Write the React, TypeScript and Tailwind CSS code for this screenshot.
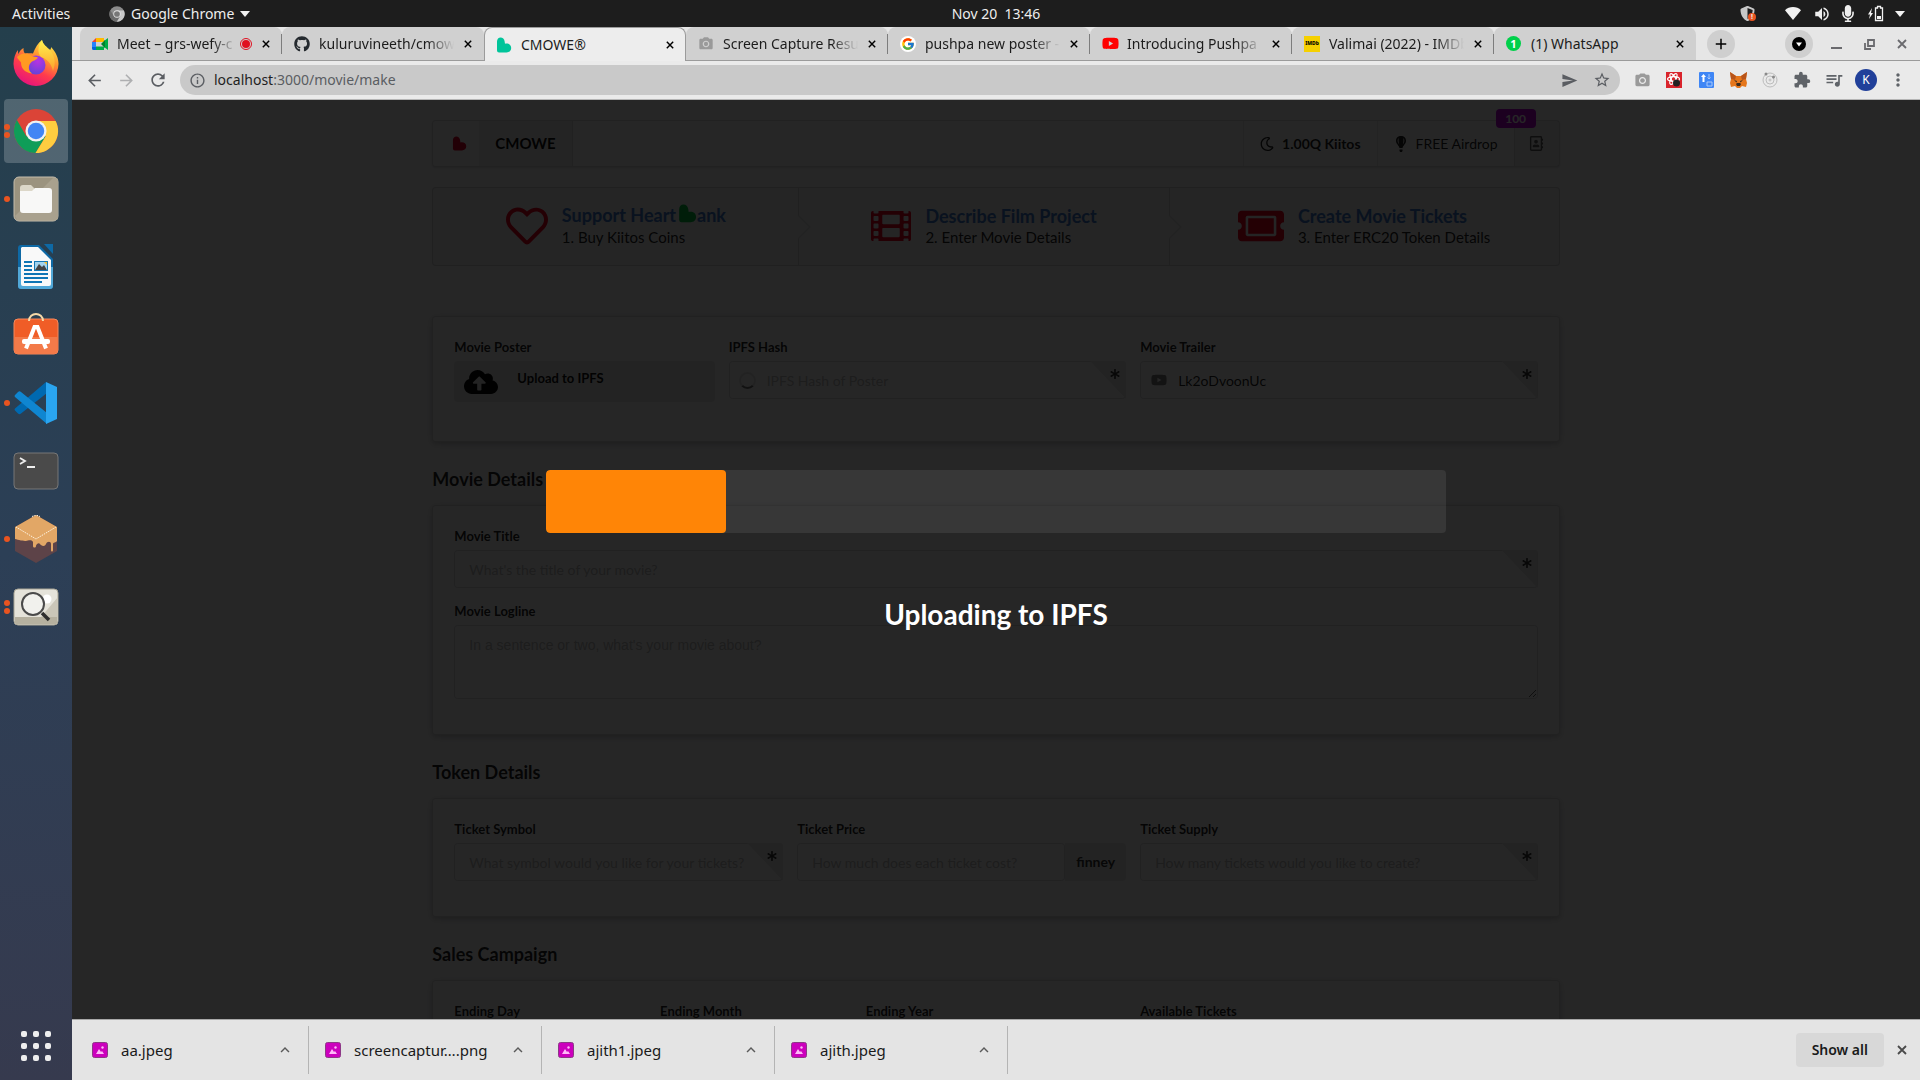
import React from "react";
import {
  FaRegHeart,
  FaFilm,
  FaTicketAlt,
  FaCloudUploadAlt,
  FaRegMoon,
  FaRegAddressBook,
  FaYoutube,
  FaAsterisk,
  FaGithub,
  FaMicrophone,
  FaShieldAlt,
} from "react-icons/fa";
import { FcGoogle } from "react-icons/fc";
import {
  MdArrowBack,
  MdArrowForward,
  MdRefresh,
  MdInfoOutline,
  MdSend,
  MdStarOutline,
  MdExtension,
  MdQueueMusic,
  MdMoreVert,
  MdPhotoCamera,
  MdExpandLess,
  MdAdd,
  MdVolumeUp,
} from "react-icons/md";

/* ---------- shared marks ---------- */

function LeafHeart({ className }: { className?: string }) {
  return (
    <svg viewBox="0 0 16 16" className={className} fill="currentColor" aria-hidden="true">
      <path d="M1 4.500C1 2 2.600.4 4.600.4S8.400 2 8.600 4.200L9 6.800c3-.8 6.200.8 6.200 4.200 0 2.600-2 4.400-4.600 4.400H3a2 2 0 0 1-2-2z" />
    </svg>
  );
}

function Cross({ className }: { className?: string }) {
  return (
    <svg viewBox="0 0 10 10" className={className} fill="none" stroke="currentColor" strokeWidth="1.800" aria-hidden="true">
      <path d="m1 1 8 8M9 1 1 9" />
    </svg>
  );
}

/* ---------- desktop top bar ---------- */

function ChromeMark({ className, gray }: { className?: string; gray?: boolean }) {
  const c = gray
    ? ["#8c8c8c", "#6b6b6b", "#c9c9c9", "#e5e5e5", "#777777"]
    : ["#db4437", "#0f9d58", "#ffcd40", "#f1f1f1", "#4285f4"];
  return (
    <svg viewBox="0 0 48 48" className={className} aria-hidden="true">
      <circle cx="24" cy="24" r="23" fill={c[0]} />
      <path d="M4.1 12.500A23 23 0 0 0 23.500 47L34 29.700 24 24 14 29.700z" fill={c[1]} />
      <path d="M24 13.500h20.500A23 23 0 0 1 23.500 47L34 29.700z" fill={c[2]} />
      <circle cx="24" cy="24" r="11" fill={c[3]} />
      <circle cx="24" cy="24" r="8.600" fill={c[4]} />
    </svg>
  );
}

function Caret() {
  return (
    <svg viewBox="0 0 10 6" className="h-[6px] w-[10px]" fill="#f2f2f2" aria-hidden="true">
      <path d="M0 0h10L5 6z" />
    </svg>
  );
}

function TopBar() {
  return (
    <header className="grid h-[27px] shrink-0 grid-cols-[72px_1fr] items-center bg-[#1d1d1d] text-sm text-[#eeeeee]">
      <button type="button" className="pl-3 text-left whitespace-nowrap">
        Activities
      </button>
      <div className="grid grid-cols-[1fr_auto_1fr] items-center">
        <button type="button" className="flex items-center pl-[37px]">
          <ChromeMark gray className="mr-[6px] size-4" />
          <span className="mr-[6px]">Google Chrome</span>
          <Caret />
        </button>
        <time className="whitespace-pre">Nov 20  13:46</time>
        <div className="flex items-center justify-end pr-[15px]">
          <span className="relative mr-[30px]">
            <FaShieldAlt className="size-[15px] text-[#c8c8c8]" />
            <span className="absolute -right-[1px] bottom-0 flex size-2 items-center justify-center rounded-full bg-[#e95420] text-[7px] font-bold">
              !
            </span>
          </span>
          <svg viewBox="0 0 16 13" className="mr-[12px] h-[13px] w-4" fill="#f2f2f2" aria-hidden="true">
            <path d="M8 13 0 3.200C2 1.200 5 0 8 0s6 1.200 8 3.200z" />
          </svg>
          <MdVolumeUp className="mr-[11px] size-[18px]" />
          <FaMicrophone className="mr-[14px] h-[17px] w-[12px]" />
          <svg viewBox="0 0 16 17" className="mr-[11px] h-[17px] w-4" aria-hidden="true">
            <path d="M4 3 0 9.500h2L1 14l4-6H3z" fill="#f2f2f2" />
            <path d="M7.500 3h2V1.500h3V3h2v12.500h-7z" fill="none" stroke="#f2f2f2" strokeWidth="1.300" />
            <path d="M9 11h4v3H9z" fill="#f2f2f2" />
          </svg>
          <Caret />
        </div>
      </div>
    </header>
  );
}

/* ---------- dock ---------- */

const firefox = (
  <svg viewBox="0 0 46 46" className="size-[46px]">
    <defs>
      <linearGradient id="fx1" x1="0.800" y1="0" x2="0.300" y2="1">
        <stop offset="0" stopColor="#fff44f" />
        <stop offset="0.350" stopColor="#ff9a2e" />
        <stop offset="0.650" stopColor="#ff3b4d" />
        <stop offset="1" stopColor="#e5127d" />
      </linearGradient>
      <radialGradient id="fx2" cx="0.600" cy="0.300" r="0.800">
        <stop offset="0" stopColor="#b833e1" />
        <stop offset="1" stopColor="#5a45d6" />
      </radialGradient>
      <linearGradient id="fx3" x1="0" y1="0" x2="0" y2="1">
        <stop offset="0" stopColor="#fff44f" />
        <stop offset="1" stopColor="#ffa02c" />
      </linearGradient>
    </defs>
    <path
      d="M29 0c1 5 5 7 8 10 1-1 1-2 1-3 5 5 7.500 11 7.500 17A22.500 22.500 0 0 1 23 46 22.500 22.500 0 0 1 .5 24c0-6 2-11 4.500-14 0 1.500 0 2.500.5 4 1-3 3-5 5-6 0 2 0 4 1.500 5.500 3-.5 6-.5 8 0C22 8 25 3 29 0z"
      fill="url(#fx1)"
    />
    <path d="M29 0c1 5 5 7 8 10 5 6 6 13 3 21-2-8-6-12-12-14-4-4-3-12 1-17z" fill="url(#fx3)" />
    <circle cx="23" cy="25" r="9.500" fill="url(#fx2)" />
    <path d="M4 17c4-4 11-4.500 14-1.500 2 1.500 5 1 7 2-2 3-5 3-7 5-3 3-3 8 1 11-8-1-11-6-11-11-1-2-3-3-4-5.500z" fill="#ff9a22" />
  </svg>
);

const files = (
  <svg viewBox="0 0 46 46" className="size-[46px]">
    <rect x="1" y="1" width="44" height="44" rx="5" fill="#9b937f" stroke="#c5bdac" />
    <path d="M2 40 40 2h3a2 2 0 0 1 2 2v38a2 2 0 0 1-2 2H4z" fill="#a9a18e" />
    <path d="M7 12a3 3 0 0 1 3-3h8l4 4v6H7z" fill="#dcd7c8" />
    <path d="M7 15h12l3-3h14a3 3 0 0 1 3 3v19a3 3 0 0 1-3 3H10a3 3 0 0 1-3-3z" fill="#f8f8f7" />
  </svg>
);

const writer = (
  <svg viewBox="0 0 38 46" className="h-[46px] w-[38px]">
    <path d="M4 1h18l14 14v27a3 3 0 0 1-3 3H4a3 3 0 0 1-3-3V4a3 3 0 0 1 3-3z" fill="#0e69a5" />
    <path d="M1 23h35v19a3 3 0 0 1-3 3H4a3 3 0 0 1-3-3z" fill="#51a8d8" />
    <path d="M5 3h16l13 13v24a2 2 0 0 1-2 2H6a2 2 0 0 1-2-2V4z" fill="#f9f9f9" />
    <path d="M27 0h9v10z" fill="#0e69a5" />
    <path d="M7 17h8v2H7zm0 4h8v2H7zm0 4h8v2H7zm0 4h24v2H7zm0 4h24v2H7zm0 4h18v2H7z" fill="#0e75b5" />
    <path d="M17 17h14v10H17z" fill="#1578b4" />
    <path d="M18 18h12v8H18z" fill="#a3d3ee" />
    <path d="m18 26 4-6 3 3 2-2 3 5z" fill="#444444" />
    <path d="M27 18h3v3z" fill="#fbc02d" />
  </svg>
);

const software = (
  <svg viewBox="0 0 46 48" className="h-[48px] w-[46px]">
    <rect x="1" y="8" width="44" height="35" rx="4" fill="#f05d27" stroke="#f6895c" />
    <path d="M1.500 26h43v13a4 4 0 0 1-4 4h-35a4 4 0 0 1-4-4z" fill="#f37a49" />
    <path d="M16 10c0-9.500 14-9.500 14 0" fill="none" stroke="#f5d9a8" strokeWidth="2" />
    <path d="M13 37.500 21.500 16h3L33 37.500" fill="none" stroke="#ffffff" strokeWidth="4" />
    <rect x="9" y="28" width="28" height="5" rx="2" fill="#ffffff" />
  </svg>
);

const vscode = (
  <svg viewBox="0 0 44 44" className="size-[44px]">
    <path d="M32 1 1 27.500c-1 1 0 2 0 2l3 3c1 1 2 1 3 0L33 12z" fill="#0069b0" />
    <path d="M33 43 1 16c-1-1 0-2 0-2l3-3c1-1 2-1 3 0l26 21z" fill="#0f86d1" />
    <path d="M32 1v42l11-5V6z" fill="#2aa5f0" />
  </svg>
);

const terminal = (
  <svg viewBox="0 0 46 38" className="h-[38px] w-[46px]">
    <rect x="1" y="1" width="44" height="36" rx="4" fill="#4a4a4a" stroke="#777777" />
    <path d="m7 6 5 3-5 3M14 15h8" fill="none" stroke="#eeeeee" strokeWidth="1.800" />
  </svg>
);

const cake = (
  <svg viewBox="0 0 42 48" className="h-[48px] w-[42px]">
    <path d="M21 0 42 12v24L21 48 0 36V12z" fill="#5d4348" />
    <path d="M21 0 42 12v14c-1 2-4 1-4 3v6c0 2-2 2-2 0v-6c0-3-4-3-5 0-1 3-5 2-6 0s-4 0-4 2-3 2-3 0v-4c-2-3-5-1-7-1S3 25 0 24V12z" fill="#e2a766" />
    <path d="m1 12 20 12 20-12M17 1.500 21 0l4 1.500" fill="none" stroke="#fff3e0" strokeWidth="1" strokeDasharray="1.500 1" />
  </svg>
);

const viewer = (
  <svg viewBox="0 0 46 38" className="h-[38px] w-[46px]">
    <rect x="1" y="1" width="44" height="36" rx="4" fill="#e5e3da" stroke="#a9a595" />
    <path d="M2 29h42v6l-2 1.500H4L2 35z" fill="#b5b09f" />
    <path d="M28 29 45 9v20z" fill="#cac6b8" />
    <circle cx="34" cy="11" r="4.500" fill="#ffffff" />
    <circle cx="20" cy="16" r="11" fill="#f4f4f1" fillOpacity="0.800" stroke="#4a4a4a" strokeWidth="2" />
    <path d="m29 25 7 7" stroke="#2d2d2d" strokeWidth="3.500" />
  </svg>
);

const dockApps = [
  { name: "Firefox", art: firefox, windows: 0 },
  { name: "Google Chrome", art: <ChromeMark className="size-[46px]" />, windows: 2, active: true },
  { name: "Files", art: files, windows: 1 },
  { name: "LibreOffice Writer", art: writer, windows: 0 },
  { name: "Ubuntu Software", art: software, windows: 0 },
  { name: "Visual Studio Code", art: vscode, windows: 1 },
  { name: "Terminal", art: terminal, windows: 0 },
  { name: "Ganache", art: cake, windows: 1 },
  { name: "Image Viewer", art: viewer, windows: 2 },
];

function Dock() {
  return (
    <nav
      aria-label="Dock"
      className="flex w-[72px] shrink-0 flex-col items-center bg-linear-to-b from-[#243f4c] via-[#2c3f56] to-[#363a4e] pt-[2px] pb-[15px]"
    >
      {dockApps.map((app) => (
        <div key={app.name} className="relative flex h-[68px] w-full items-center justify-center">
          <div className="absolute left-1 flex flex-col gap-[2px]">
            {Array.from({ length: app.windows }, (_, i) => (
              <span key={i} className="size-[6px] rounded-full bg-[#e95420]" />
            ))}
          </div>
          <button
            type="button"
            aria-label={app.name}
            className={
              app.active
                ? "flex size-16 items-center justify-center rounded-[4px] bg-white/20"
                : "flex size-16 items-center justify-center rounded-[4px]"
            }
          >
            {app.art}
          </button>
        </div>
      ))}
      <button type="button" aria-label="Show Applications" className="mt-auto grid grid-cols-3 gap-[6px] p-1">
        {Array.from({ length: 9 }, (_, i) => (
          <span key={i} className="size-[6px] rounded-[2px] bg-[#eeeeee]" />
        ))}
      </button>
    </nav>
  );
}

/* ---------- browser tabs and toolbar ---------- */

const meetIcon = (
  <svg viewBox="0 0 16 16" className="size-4">
    <path d="M4 2h8v4H4z" fill="#ffba00" />
    <path d="M0 6l4-4v4z" fill="#ea4335" />
    <path d="M0 6h4v5H0z" fill="#2684fc" />
    <path d="M0 11h4v3H1.500A1.500 1.500 0 0 1 0 12.500z" fill="#0066da" />
    <path d="M4 10.500h8V14H4zM12 5l4-3v12l-4-3z" fill="#00ac47" />
    <path d="M9 8l4-4v8z" fill="#00832d" />
  </svg>
);

const imdbIcon = (
  <span className="flex size-4 items-center justify-center bg-[#f5d000] text-[5px] leading-none font-extrabold text-black">
    IMDb
  </span>
);

const whatsappIcon = (
  <span className="flex size-[15px] items-center justify-center rounded-full bg-[#00d04a] text-[11px] leading-none font-bold text-white">
    1
  </span>
);

const googleIcon = (
  <span className="flex size-4 items-center justify-center rounded-full bg-white">
    <FcGoogle className="size-[14px]" />
  </span>
);

const tabs = [
  { title: "Meet – grs-wefy-c", icon: meetIcon, recording: true, fade: true, divider: true },
  { title: "kuluruvineeth/cmow", icon: <FaGithub className="size-4 text-[#24292e]" />, fade: true },
  { title: "CMOWE®", icon: <LeafHeart className="size-4 text-[#00c49a]" />, active: true },
  { title: "Screen Capture Resu", icon: <MdPhotoCamera className="size-4 text-[#9a9a9a]" />, fade: true, divider: true },
  { title: "pushpa new poster -", icon: googleIcon, fade: true, divider: true },
  { title: "Introducing Pushpa", icon: <FaYoutube className="size-[17px] text-[#ff0000]" />, fade: true, divider: true },
  { title: "Valimai (2022) - IMDb", icon: imdbIcon, fade: true, divider: true },
  { title: "(1) WhatsApp", icon: whatsappIcon },
];

function TabStrip() {
  return (
    <div className="flex h-[34px] items-stretch bg-[#e6e6e6] pl-[8px] shadow-[inset_0_-1px_0_#9b9b9b]">
      <div className="flex max-w-[1616px] min-w-0 flex-1">
        {tabs.map((tab) => (
          <div
            key={tab.title}
            className={
              tab.active
                ? "relative flex min-w-0 flex-1 items-center rounded-t-lg border border-b-0 border-[#9b9b9b] bg-[#ededed] pr-[11px] pl-[11px]"
                : "relative mb-px flex min-w-0 flex-1 items-center rounded-t-lg bg-[#d0d0d0] pr-[12px] pl-[12px]"
            }
          >
            <span className="flex w-[17px] shrink-0">{tab.icon}</span>
            <span
              className={
                tab.fade
                  ? "ml-2 min-w-0 flex-1 overflow-hidden mask-r-from-80% text-sm whitespace-nowrap text-[#1c1c1c]"
                  : "ml-2 min-w-0 flex-1 overflow-hidden text-sm whitespace-nowrap text-[#1c1c1c]"
              }
            >
              {tab.title}
            </span>
            {tab.recording && (
              <span className="ml-1 flex size-3 shrink-0 items-center justify-center rounded-full border border-[#e01020]">
                <span className="size-2 rounded-full bg-[#e01020]" />
              </span>
            )}
            <button type="button" aria-label={"Close " + tab.title} className="ml-[10px] shrink-0">
              <Cross className="size-2 text-black" />
            </button>
            {tab.divider && <span className="absolute top-[7px] right-0 h-5 w-px bg-[#7d7d7d]" />}
          </div>
        ))}
      </div>
      <div className="ml-auto flex w-[224px] shrink-0 items-center justify-between pr-[13px] pl-[11px]">
        <button type="button" aria-label="New tab" className="flex size-7 items-center justify-center rounded-full bg-[#cfcfcf]">
          <MdAdd className="size-[18px] text-black" />
        </button>
        <div className="flex items-center text-[#6a6a6e]">
          <button type="button" aria-label="Search tabs" className="mr-[18px] flex size-7 items-center justify-center rounded-full bg-[#cfcfcf]">
            <svg viewBox="0 0 14 14" className="size-[14px]">
              <circle cx="7" cy="7" r="7" fill="#000000" />
              <path d="M4 5.500h6L7 9.500z" fill="#ffffff" />
            </svg>
          </button>
          <button type="button" aria-label="Minimize" className="mr-[22px] flex h-[10px] w-[11px] items-end">
            <span className="h-[2px] w-full bg-current" />
          </button>
          <button type="button" aria-label="Restore" className="mr-[22px]">
            <svg viewBox="0 0 11 11" className="size-[11px]" fill="none" stroke="currentColor" strokeWidth="1.800">
              <path d="M4 1h6v6H4zM1 4v6h6" />
            </svg>
          </button>
          <button type="button" aria-label="Close window">
            <Cross className="size-[10px]" />
          </button>
        </div>
      </div>
    </div>
  );
}

const extensions = [
  { name: "Capture", art: <MdPhotoCamera className="size-[17px] text-[#9a9a9a]" /> },
  {
    name: "Helper",
    art: (
      <svg viewBox="0 0 16 16" className="size-4">
        <path d="M0 0h16v16H0z" fill="#d9242c" />
        <g fill="none" stroke="#ffffff" strokeWidth="1.200">
          <ellipse cx="7.500" cy="7" rx="6" ry="2.300" />
          <ellipse cx="7.500" cy="7" rx="6" ry="2.300" transform="rotate(60 7.500 7)" />
          <ellipse cx="7.500" cy="7" rx="6" ry="2.300" transform="rotate(120 7.500 7)" />
        </g>
        <circle cx="10.500" cy="11" r="3.500" fill="#222222" />
      </svg>
    ),
  },
  {
    name: "Transfer",
    art: (
      <svg viewBox="0 0 15 16" className="h-4 w-[15px]">
        <rect width="15" height="16" rx="1" fill="#3f86f5" />
        <path d="M4.500 2 7 5H5.500v5h-2V5H2z" fill="#ffffff" />
        <path d="M10 2v5M8.500 5.500 10 7l1.500-1.500M8 10h5v4H8z" fill="none" stroke="#a9c9fb" />
      </svg>
    ),
  },
  {
    name: "MetaMask",
    art: (
      <svg viewBox="0 0 17 16" className="h-4 w-[17px]">
        <path d="m0 0 6 4h5l6-4-1 7 1 4-1 4-4-1-2 2H7l-2-2-4 1-1-4 1-4z" fill="#e5761b" />
        <path d="M0 0l6 4-1 4-4-1zM17 0l-6 4 1 4 4-1z" fill="#b8541a" />
        <path d="m6 12 1 2h3l1-2-1-1H7z" fill="#3a2c20" />
        <path d="m4 8 3 1-.5 1.500zM13 8l-3 1 .5 1.500z" fill="#3a2c20" />
      </svg>
    ),
  },
  {
    name: "Orbit",
    art: (
      <svg viewBox="0 0 16 16" className="size-4" fill="none" stroke="#bcbcbc">
        <circle cx="8" cy="8" r="7" />
        <circle cx="8" cy="8" r="4" />
        <circle cx="8" cy="8" r="1" />
        <circle cx="4" cy="2" r="1.500" fill="#8a8a8a" stroke="none" />
        <circle cx="11.500" cy="5" r="1.500" fill="#8a8a8a" stroke="none" />
      </svg>
    ),
  },
  { name: "Extensions", art: <MdExtension className="size-[18px] text-[#5f6368]" /> },
  { name: "Media", art: <MdQueueMusic className="size-[20px] text-[#5f6368]" /> },
  {
    name: "Profile",
    art: (
      <span className="flex size-[22px] items-center justify-center rounded-full bg-[#21409a] text-xs text-white">
        K
      </span>
    ),
  },
  { name: "Menu", art: <MdMoreVert className="size-[20px] text-[#5f6368]" /> },
];

function Toolbar() {
  return (
    <div className="flex h-[39px] items-center border-b border-[#b5b5b5] bg-[#eaeaea] pr-[6px] pl-[6px]">
      <button type="button" aria-label="Back" className="flex w-8 justify-center">
        <MdArrowBack className="size-[19px] text-[#5a5d62]" />
      </button>
      <button type="button" aria-label="Forward" className="flex w-8 justify-center">
        <MdArrowForward className="size-[19px] text-[#aeafb1]" />
      </button>
      <button type="button" aria-label="Reload" className="flex w-8 justify-center">
        <MdRefresh className="size-[20px] text-[#5a5d62]" />
      </button>
      <div className="mr-[6px] ml-[6px] flex h-[30px] flex-1 items-center rounded-full bg-[#c9c9c9] pr-[9px] pl-[9px] text-[#5a5d62]">
        <MdInfoOutline className="size-[17px]" />
        <div className="ml-2 flex flex-1 text-sm">
          <span className="text-[#1f1f1f]">localhost</span>
          <span>:3000/movie/make</span>
        </div>
        <MdSend className="mr-[15px] size-[17px]" />
        <MdStarOutline className="size-[18px]" />
      </div>
      {extensions.map((ext) => (
        <button key={ext.name} type="button" aria-label={ext.name} className="flex w-8 justify-center">
          {ext.art}
        </button>
      ))}
    </div>
  );
}

/* ---------- page ---------- */

function SiteNav() {
  return (
    <nav className="flex h-[47px] items-stretch rounded-[4px] border border-[#22242626] bg-white shadow-[0_1px_2px_0_#22242626]">
      <a href="#home" aria-label="Home" className="flex w-[46px] items-center justify-end pr-[12px]">
        <LeafHeart className="size-[15px] text-[#e00028]" />
      </a>
      <a
        href="#cmowe"
        className="flex items-center border-r border-[#2224261a] bg-black/5 px-4 text-[15px] font-bold text-black/95"
      >
        CMOWE
      </a>
      <div className="ml-auto flex items-stretch text-sm text-black/87">
        <a href="#kiitos" className="flex items-center border-l border-[#2224261a] px-4 font-bold">
          <FaRegMoon className="mr-2 size-[14px]" />
          1.00Q Kiitos
        </a>
        <a href="#airdrop" className="flex items-center border-l border-[#2224261a] px-4">
          <svg viewBox="0 0 12 16" className="mr-2 h-4 w-[14px]" fill="currentColor" aria-hidden="true">
            <path
              fillRule="evenodd"
              d="M6 0c3 0 5 2 5 4.800C11 8 8 9.500 7.500 12h-3C4 9.500 1 8 1 4.800 1 2 3 0 6 0zM3.800 2C2 3.500 2.300 6.500 4.200 8.500 3.400 6 3.300 4 3.800 2zm4.400 0c.5 2 .4 4-.4 6.500C9.700 6.500 10 3.500 8.200 2zM4.500 13.500h3v1.500l-.7 1H5.200l-.7-1z"
            />
          </svg>
          FREE Airdrop
        </a>
        <a
          href="#contacts"
          aria-label="Contacts"
          className="relative flex w-[45px] items-center justify-center border-l border-[#2224261a] bg-black/5 text-black/60"
        >
          <FaRegAddressBook className="size-[15px]" />
          <span className="absolute -top-3 right-[23px] flex h-[19px] w-10 items-center justify-center rounded-[4px] bg-[#b800d8] text-xs font-bold text-white">
            100
          </span>
        </a>
      </div>
    </nav>
  );
}

function StepArrow() {
  return (
    <span className="absolute top-1/2 -right-[9px] z-10 size-[17px] -translate-y-1/2 rotate-[-45deg] border-r border-b border-[#2224261a] bg-[#f3f4f5]" />
  );
}

const steps = [
  {
    icon: <FaRegHeart className="size-[42px] text-[#f00020]" />,
    title: (
      <>
        Support Heart
        <LeafHeart className="ml-[2px] inline size-[19px] -translate-y-1 text-[#00c040]" />
        ank
      </>
    ),
    text: "1. Buy Kiitos Coins",
    size: "flex-[366]",
  },
  {
    icon: <FaFilm className="size-[40px] text-[#f00020]" />,
    title: "Describe Film Project",
    text: "2. Enter Movie Details",
    size: "flex-[370]",
  },
  {
    icon: <FaTicketAlt className="size-[46px] text-[#f00020]" />,
    title: "Create Movie Tickets",
    text: "3. Enter ERC20 Token Details",
    size: "flex-[390]",
  },
];

function Steps() {
  return (
    <ol className="mt-5 flex h-[79px] rounded-[4px] border border-[#22242626] bg-[#f3f4f5]">
      {steps.map((step, i) => (
        <li
          key={step.text}
          className={
            i < 2
              ? step.size + " relative flex items-center justify-center border-r border-[#22242626] pb-[2px]"
              : step.size + " relative flex items-center justify-center pb-[2px]"
          }
        >
          <span className="mr-[14px]">{step.icon}</span>
          <div>
            <h2 className="text-lg leading-[22px] font-bold text-[#4078cc]">{step.title}</h2>
            <p className="text-[15px] leading-5 text-black/87">{step.text}</p>
          </div>
          {i < 2 && <StepArrow />}
        </li>
      ))}
    </ol>
  );
}

function Segment({ children }: { children: React.ReactNode }) {
  return (
    <div className="rounded-[4px] border border-[#22242626] bg-white px-[21px] pt-[21px] pb-[35px] shadow-[0_2px_4px_0_#2224261f,0_2px_10px_0_#22242626]">
      {children}
    </div>
  );
}

function Row({ children }: { children: React.ReactNode }) {
  return <div className="grid grid-cols-[repeat(16,minmax(0,1fr))] gap-x-[14px]">{children}</div>;
}

function Heading({ children }: { children: React.ReactNode }) {
  return <h3 className="mt-[26px] mb-[14px] text-lg leading-[23px] font-bold text-black/87">{children}</h3>;
}

function Required() {
  return (
    <span className="pointer-events-none absolute top-0 right-0 h-[38px] w-9">
      <span className="absolute inset-0 rounded-tr-[4px] bg-[#e8e8e8] [clip-path:polygon(0_0,100%_0,100%_100%)]" />
      <FaAsterisk className="absolute top-[8px] right-[6px] size-[10px] text-black/80" />
    </span>
  );
}

type FieldProps = {
  id: string;
  label: string;
  span: string;
  placeholder?: string;
  value?: string;
  icon?: React.ReactNode;
  required?: boolean;
  unit?: string;
};

function Field({ id, label, span, placeholder, value, icon, required, unit }: FieldProps) {
  return (
    <div className={span}>
      <label htmlFor={id} className="mb-[5px] block text-[13px] leading-[18px] font-bold text-black/87">
        {label}
      </label>
      <div className="relative flex">
        {icon && <span className="absolute top-0 left-[10px] flex h-[38px] items-center">{icon}</span>}
        <input
          id={id}
          type="text"
          defaultValue={value}
          placeholder={placeholder}
          className={
            icon
              ? "h-[38px] w-full min-w-0 rounded-[4px] border border-[#22242626] bg-white pr-3 pl-[37px] text-sm text-black/87 placeholder:text-[#bfbfbf]"
              : "h-[38px] w-full min-w-0 rounded-[4px] border border-[#22242626] bg-white px-[14px] text-sm text-black/87 placeholder:text-[#bfbfbf]"
          }
        />
        {unit && (
          <span className="flex h-[38px] items-center rounded-r-[4px] bg-[#e8e8e8] px-[11px] text-sm font-bold text-black/80">
            {unit}
          </span>
        )}
        {required && <Required />}
      </div>
    </div>
  );
}

function MoviePage() {
  return (
    <div className="mx-auto w-[61%] min-w-[900px] pt-5 font-['Lato',sans-serif]">
      <SiteNav />
      <Steps />
      <form>
        <div className="mt-[50px]">
          <Segment>
            <Row>
              <div className="col-span-4">
                <p className="mb-[5px] text-[13px] leading-[18px] font-bold text-black/87">Movie Poster</p>
                <button
                  type="button"
                  className="mb-[4px] flex h-[41px] w-full items-center rounded-[4px] bg-[#e8e8e8] pl-[10px] text-[13px] font-bold text-black/95"
                >
                  <FaCloudUploadAlt className="mr-[19px] size-[34px]" />
                  <span className="pb-[6px]">Upload to IPFS</span>
                </button>
              </div>
              <Field
                id="hash"
                label="IPFS Hash"
                span="col-span-6"
                placeholder="IPFS Hash of Poster"
                required
                icon={<span className="size-[17px] rounded-full border-2 border-black/10 border-b-[#767676]" />}
              />
              <Field
                id="trailer"
                label="Movie Trailer"
                span="col-span-6"
                value="Lk2oDvoonUc"
                required
                icon={<FaYoutube className="ml-px size-4 text-black/50" />}
              />
            </Row>
          </Segment>
        </div>

        <Heading>Movie Details</Heading>
        <Segment>
          <Field id="title" label="Movie Title" span="" placeholder="What's the title of your movie?" required />
          <label
            htmlFor="logline"
            className="mt-[14px] mb-[5px] block text-[13px] leading-[18px] font-bold text-black/87"
          >
            Movie Logline
          </label>
          <textarea
            id="logline"
            placeholder="In a sentence or two, what's your movie about?"
            className="block h-[74px] w-full resize-y rounded-[4px] border border-[#22242626] bg-white px-[14px] py-[10px] font-['Liberation_Sans',sans-serif] text-sm leading-[18px] placeholder:text-[#bfbfbf]"
          />
        </Segment>

        <Heading>Token Details</Heading>
        <Segment>
          <Row>
            <Field
              id="symbol"
              label="Ticket Symbol"
              span="col-span-5"
              placeholder="What symbol would you like for your tickets?"
              required
            />
            <Field id="price" label="Ticket Price" span="col-span-5" placeholder="How much does each ticket cost?" unit="finney" />
            <Field
              id="supply"
              label="Ticket Supply"
              span="col-span-6"
              placeholder="How many tickets would you like to create?"
              required
            />
          </Row>
        </Segment>

        <Heading>Sales Campaign</Heading>
        <Segment>
          <Row>
            <Field id="day" label="Ending Day" span="col-span-3" />
            <Field id="month" label="Ending Month" span="col-span-3" />
            <Field id="year" label="Ending Year" span="col-span-4" />
            <Field id="available" label="Available Tickets" span="col-span-6" />
          </Row>
        </Segment>
      </form>
    </div>
  );
}

function UploadDimmer({ percent }: { percent: number }) {
  return (
    <div className="absolute inset-0 z-20 flex flex-col items-center justify-center bg-black/85 font-['Lato',sans-serif]">
      <div
        role="progressbar"
        aria-label="Uploading to IPFS"
        aria-valuenow={percent}
        className="h-[63px] w-[900px] max-w-[90%] overflow-hidden rounded-[4px] bg-white/8"
      >
        <div className="h-full rounded-[4px] bg-[#ff8506]" style={{ width: percent + "%" }} />
      </div>
      <p className="mt-[61px] mb-[15px] text-[28px] leading-10 font-bold text-white">Uploading to IPFS</p>
    </div>
  );
}

/* ---------- downloads ---------- */

const downloads = ["aa.jpeg", "screencaptur….png", "ajith1.jpeg", "ajith.jpeg"];

function DownloadShelf() {
  return (
    <footer className="flex h-[61px] shrink-0 items-center border-t border-[#a8a8a8] bg-[#e4e4e4] pr-[13px] pl-[4px] text-[15px] text-[#1a1a1a]">
      {downloads.map((file) => (
        <div key={file} className="flex h-12 w-[233px] items-center border-r border-[#b4b4b4] pr-[14px] pl-4">
          <svg viewBox="0 0 16 17" className="mr-[13px] h-[17px] w-4 shrink-0" aria-hidden="true">
            <rect x="0.500" y="0.500" width="15" height="15" rx="2" fill="#cc00bd" stroke="#8c3a86" />
            <path d="m4 12 3-5 2 3 1-1 2 3z" fill="#ffb8f8" />
            <circle cx="10.500" cy="5.500" r="1.200" fill="#ffb8f8" />
          </svg>
          <a href="#file" className="flex-1 whitespace-nowrap">
            {file}
          </a>
          <button type="button" aria-label={"Options for " + file}>
            <MdExpandLess className="size-[18px] text-[#5a5a5a]" />
          </button>
        </div>
      ))}
      <button type="button" className="ml-auto h-[34px] rounded-[4px] bg-[#d8d8d8] px-4 text-sm font-semibold">
        Show all
      </button>
      <button type="button" aria-label="Close downloads" className="ml-[13px]">
        <Cross className="size-[10px] text-[#4a4a4a]" />
      </button>
    </footer>
  );
}

export default function App() {
  return (
    <div className="flex h-screen flex-col overflow-hidden font-['Noto_Sans',sans-serif]">
      <TopBar />
      <div className="flex min-h-0 flex-1">
        <Dock />
        <div className="flex min-w-0 flex-1 flex-col">
          <TabStrip />
          <Toolbar />
          <main className="relative min-h-0 flex-1 overflow-hidden bg-white">
            <MoviePage />
            <UploadDimmer percent={20} />
          </main>
          <DownloadShelf />
        </div>
      </div>
    </div>
  );
}
